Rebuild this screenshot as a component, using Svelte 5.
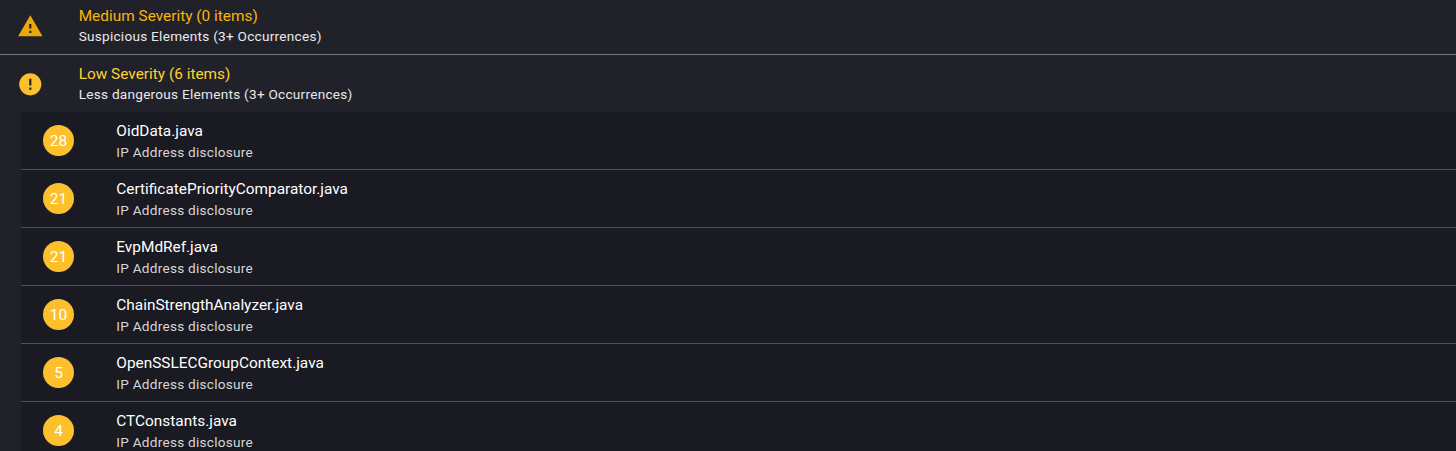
<script>
  const files = [
    { count: 28, name: 'OidData.java' },
    { count: 21, name: 'CertificatePriorityComparator.java' },
    { count: 21, name: 'EvpMdRef.java' },
    { count: 10, name: 'ChainStrengthAnalyzer.java' },
    { count: 5, name: 'OpenSSLECGroupContext.java' },
    { count: 4, name: 'CTConstants.java' }
  ];
</script>

<main>
  <header class="row medium">
    <svg class="icon" viewBox="0 0 24 24"><path d="M1 21h22L12 2 1 21zm12-3h-2v-2h2v2zm0-4h-2v-4h2v4z" /></svg>
    <div class="text">
      <div class="title"><span>Medium Severity (0 items)</span></div>
      <div class="sub"><span>Suspicious Elements (3+ Occurrences)</span></div>
    </div>
  </header>
  <header class="row low">
    <svg class="icon" viewBox="0 0 24 24"><path d="M12 2C6.48 2 2 6.48 2 12s4.48 10 10 10 10-4.48 10-10S17.52 2 12 2zm1 15h-2v-2h2v2zm0-4h-2V7h2v6z" /></svg>
    <div class="text">
      <div class="title"><span>Low Severity (6 items)</span></div>
      <div class="sub"><span>Less dangerous Elements (3+ Occurrences)</span></div>
    </div>
  </header>
  <ul>
    {#each files as file}
      <li class="row">
        <div class="badge">{file.count}</div>
        <div class="text">
          <div class="title"><span>{file.name}</span></div>
          <div class="sub"><span>IP Address disclosure</span></div>
        </div>
      </li>
    {/each}
  </ul>
</main>

<style>
  :global(body) { background: #21212a; overflow: hidden; }
  main {
    height: 451px;
    overflow: hidden;
    background: #21212a;
    color: #fff;
    font-family: Roboto, sans-serif;
  }
  .row { display: flex; box-sizing: border-box; }
  .icon { width: 26.6px; height: 26.6px; flex: none; fill: currentColor; }
  .text { white-space: nowrap; }
  .title { font-size: 15.4px; line-height: 21px; }
  .sub { font-size: 13.6px; line-height: 21px; letter-spacing: 0.26px; color: #e9e9ea; }
  header { padding-left: 16.7px; }
  header .text { margin-left: 35.4px; }
  .medium { height: 55px; padding-top: 6px; border-bottom: 1px solid #77787b; color: #f9b50b; }
  .medium .icon { margin-top: 6.8px; color: #eba80c; }
  .medium .sub { line-height: 19px; }
  .low { height: 57px; padding-top: 9px; color: #fdd132; }
  .low .icon { margin-top: 6.7px; color: #fcc02d; }
  .low .sub { line-height: 19px; }
  ul { list-style: none; margin: 0 0 0 21px; padding: 0; background: #1a1a22; }
  li { height: 58px; padding: 9px 0 0 22px; border-bottom: 1px solid #505055; }
  li .text { margin-left: 42.3px; }
  li .sub { color: #d6d6d8; }
  .badge {
    width: 31px;
    height: 31px;
    flex: none;
    margin-top: 4px;
    border-radius: 50%;
    background: #fcc02d;
    font-size: 15.5px;
    line-height: 33px;
    text-align: center;
  }
</style>
